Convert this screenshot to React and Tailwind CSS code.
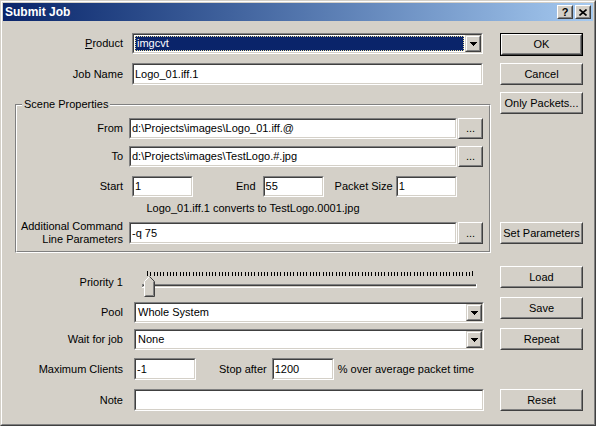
import React from "react";

const Sunken = ({ className = "", innerClass = "", children }) => (
  <div className={`border border-t-[#808080] border-l-[#808080] border-b-white border-r-white ${className}`}>
    <div className={`h-full w-full border border-t-[#404040] border-l-[#404040] border-b-[#d4d0c8] border-r-[#d4d0c8] bg-white flex items-center overflow-hidden whitespace-nowrap ${innerClass}`}>
      {children}
    </div>
  </div>
);

const Raised = ({ className = "", children }) => (
  <div className={`border border-t-white border-l-white border-b-[#404040] border-r-[#404040] bg-[#d4d0c8] ${className}`}>
    <div className="h-full w-full border border-t-[#d4d0c8] border-l-[#d4d0c8] border-b-[#808080] border-r-[#808080] flex items-center justify-center whitespace-nowrap">
      {children}
    </div>
  </div>
);

const DropBtn = () => (
  <div className="h-full w-[16px] shrink-0 border border-t-[#d4d0c8] border-l-[#d4d0c8] border-b-[#404040] border-r-[#404040] bg-[#d4d0c8]">
    <div className="h-full w-full border border-t-white border-l-white border-b-[#808080] border-r-[#808080] flex items-center justify-center">
      <svg width="7" height="4" viewBox="0 0 7 4" shapeRendering="crispEdges">
        <rect x="0" y="0" width="7" height="1" fill="#000" />
        <rect x="1" y="1" width="5" height="1" fill="#000" />
        <rect x="2" y="2" width="3" height="1" fill="#000" />
        <rect x="3" y="3" width="1" height="1" fill="#000" />
      </svg>
    </div>
  </div>
);

const Combo = ({ className = "", children }) => (
  <Sunken className={className}>
    <div className="flex-1 h-full min-w-0">{children}</div>
    <DropBtn />
  </Sunken>
);

const Slider = () => {
  const ticks = [];
  for (let i = 0; i <= 100; i++) {
    const x = Math.round(9 + i * 3.25);
    const first = i === 0 || i === 100;
    ticks.push(<rect key={i} x={x} y={first ? 5 : 6} width="1" height={first ? 5 : 4} fill="#000" />);
  }
  return (
    <svg width="345" height="32" viewBox="0 0 345 32" shapeRendering="crispEdges" className="ml-[15px] shrink-0">
      {ticks}
      <rect x="4" y="18" width="335" height="1" fill="#808080" />
      <rect x="4" y="18" width="1" height="4" fill="#808080" />
      <rect x="5" y="19" width="333" height="1" fill="#404040" />
      <rect x="5" y="19" width="1" height="2" fill="#404040" />
      <rect x="5" y="20" width="333" height="1" fill="#d4d0c8" />
      <rect x="338" y="18" width="1" height="4" fill="#fff" />
      <rect x="4" y="21" width="335" height="1" fill="#fff" />
      <polygon points="6,15 11,10 12,10 17,15 17,31 6,31" fill="#d4d0c8" shapeRendering="auto" />
      <polyline points="6.5,30.5 6.5,15.5 11.5,10.5" fill="none" stroke="#fff" strokeWidth="1" shapeRendering="auto" />
      <polyline points="11.5,10.5 16.5,15.5 16.5,30.5 6.5,30.5" fill="none" stroke="#404040" strokeWidth="1" shapeRendering="auto" />
      <polyline points="15.5,15.5 15.5,29.5 7.5,29.5" fill="none" stroke="#808080" strokeWidth="1" shapeRendering="auto" />
    </svg>
  );
};

export default function App() {
  return (
    <div className="w-[596px] h-[426px] font-['Liberation_Sans',Arial,sans-serif] text-[11px] leading-[13px] text-black bg-[#d4d0c8] border border-t-[#d4d0c8] border-l-[#d4d0c8] border-b-[#404040] border-r-[#404040]">
      <div className="h-full w-full border border-t-white border-l-white border-b-[#808080] border-r-[#808080] p-[1px] flex flex-col">
        <div className="h-[18px] shrink-0 flex items-center bg-linear-to-r from-[#0a246a] to-[#a6caf0] pl-[2px] pr-[2px]">
          <span className="text-white font-bold text-[12px]">Submit Job</span>
          <div className="ml-auto flex gap-[2px]">
            <Raised className="w-[16px] h-[14px]">
              <span className="font-bold text-[11px] leading-[10px]">?</span>
            </Raised>
            <Raised className="w-[16px] h-[14px]">
              <svg width="8" height="7" viewBox="0 0 8 7">
                <path d="M0.5 0.5 L7.5 6.5 M7.5 0.5 L0.5 6.5" stroke="#000" strokeWidth="1.6" />
              </svg>
            </Raised>
          </div>
        </div>

        <div className="flex flex-1">
          <div className="w-[490px] shrink-0 flex flex-col">
            <div className="mt-[12px] h-[21px] flex items-center">
              <div className="w-[120px] text-right"><span className="underline">P</span>roduct</div>
              <Combo className="ml-[9px] w-[351px] h-full">
                <div className="h-full p-[1px]">
                  <div className="h-full bg-[#0a246a] text-white border border-dotted border-[#e8dc9c] flex items-center pl-[1px]">imgcvt</div>
                </div>
              </Combo>
            </div>
            <div className="mt-[9px] h-[22px] flex items-center">
              <div className="w-[120px] text-right">Job Name</div>
              <Sunken className="ml-[9px] w-[351px] h-full" innerClass="pl-[1px]">Logo_01.iff.1</Sunken>
            </div>

            <div className="mt-[19px] ml-[12px] w-[476px] h-[149px] relative border border-t-[#808080] border-l-[#808080] border-b-white border-r-white">
              <div className="h-full w-full border border-t-white border-l-white border-b-[#808080] border-r-[#808080] flex flex-col">
                <div className="mt-[12px] h-[21px] flex items-center">
                  <div className="w-[106px] text-right">From</div>
                  <Sunken className="ml-[6px] w-[328px] h-full" innerClass="pl-[1px]">d:\Projects\images\Logo_01.iff.@</Sunken>
                  <Raised className="ml-[1px] w-[25px] h-full">...</Raised>
                </div>
                <div className="mt-[7px] h-[21px] flex items-center">
                  <div className="w-[106px] text-right">To</div>
                  <Sunken className="ml-[6px] w-[328px] h-full" innerClass="pl-[1px]">d:\Projects\images\TestLogo.#.jpg</Sunken>
                  <Raised className="ml-[1px] w-[25px] h-full">...</Raised>
                </div>
                <div className="mt-[9px] h-[21px] flex items-center">
                  <div className="w-[106px] text-right">Start</div>
                  <Sunken className="ml-[9px] w-[61px] h-full" innerClass="pl-[1px]">1</Sunken>
                  <div className="ml-[43px]">End</div>
                  <Sunken className="ml-[7px] w-[61px] h-full" innerClass="pl-[1px]">55</Sunken>
                  <div className="ml-[11px]">Packet Size</div>
                  <Sunken className="ml-[3px] w-[61px] h-full" innerClass="pl-[1px]">1</Sunken>
                </div>
                <div className="mt-[5px] h-[13px] text-center">Logo_01.iff.1 converts to TestLogo.0001.jpg</div>
                <div className="mt-[7px] h-[22px] flex items-center">
                  <div className="w-[106px] text-right">Additional Command<br />Line Parameters</div>
                  <Sunken className="ml-[6px] w-[328px] h-full" innerClass="pl-[1px]">-q 75</Sunken>
                  <Raised className="ml-[1px] w-[25px] h-full">...</Raised>
                </div>
              </div>
              <span className="absolute left-[6px] top-[-7px] bg-[#d4d0c8] px-[2px]">Scene Properties</span>
            </div>

            <div className="mt-[13px] h-[32px] flex items-center">
              <div className="w-[120px] text-right">Priority 1</div>
              <Slider />
            </div>
            <div className="mt-[4px] h-[21px] flex items-center">
              <div className="w-[120px] text-right">Pool</div>
              <Combo className="ml-[11px] w-[350px] h-full">
                <div className="h-full flex items-center pl-[2px]">Whole System</div>
              </Combo>
            </div>
            <div className="mt-[6px] h-[21px] flex items-center">
              <div className="w-[120px] text-right">Wait for job</div>
              <Combo className="ml-[11px] w-[350px] h-full">
                <div className="h-full flex items-center pl-[2px]">None</div>
              </Combo>
            </div>
            <div className="mt-[8px] h-[22px] flex items-center">
              <div className="w-[120px] text-right">Maximum Clients</div>
              <Sunken className="ml-[11px] w-[62px] h-full" innerClass="pl-[1px]">-1</Sunken>
              <div className="ml-[23px]">Stop after</div>
              <Sunken className="ml-[5px] w-[62px] h-full" innerClass="pl-[1px]">1200</Sunken>
              <div className="ml-[4px] whitespace-nowrap">% over average packet time</div>
            </div>
            <div className="mt-[9px] h-[22px] flex items-center">
              <div className="w-[120px] text-right">Note</div>
              <Sunken className="ml-[11px] w-[350px] h-full" />
            </div>
          </div>

          <div className="ml-[7px] w-[83px] shrink-0 flex flex-col">
            <div className="mt-[12px] h-[23px] border border-black">
              <Raised className="h-full w-full">OK</Raised>
            </div>
            <Raised className="mt-[7px] h-[22px]">Cancel</Raised>
            <Raised className="mt-[7px] h-[22px]">Only Packets...</Raised>
            <Raised className="mt-[108px] h-[22px]">Set Parameters</Raised>
            <Raised className="mt-[22px] h-[22px]">Load</Raised>
            <Raised className="mt-[9px] h-[22px]">Save</Raised>
            <Raised className="mt-[9px] h-[22px]">Repeat</Raised>
            <Raised className="mt-[39px] h-[22px]">Reset</Raised>
          </div>
        </div>
      </div>
    </div>
  );
}
